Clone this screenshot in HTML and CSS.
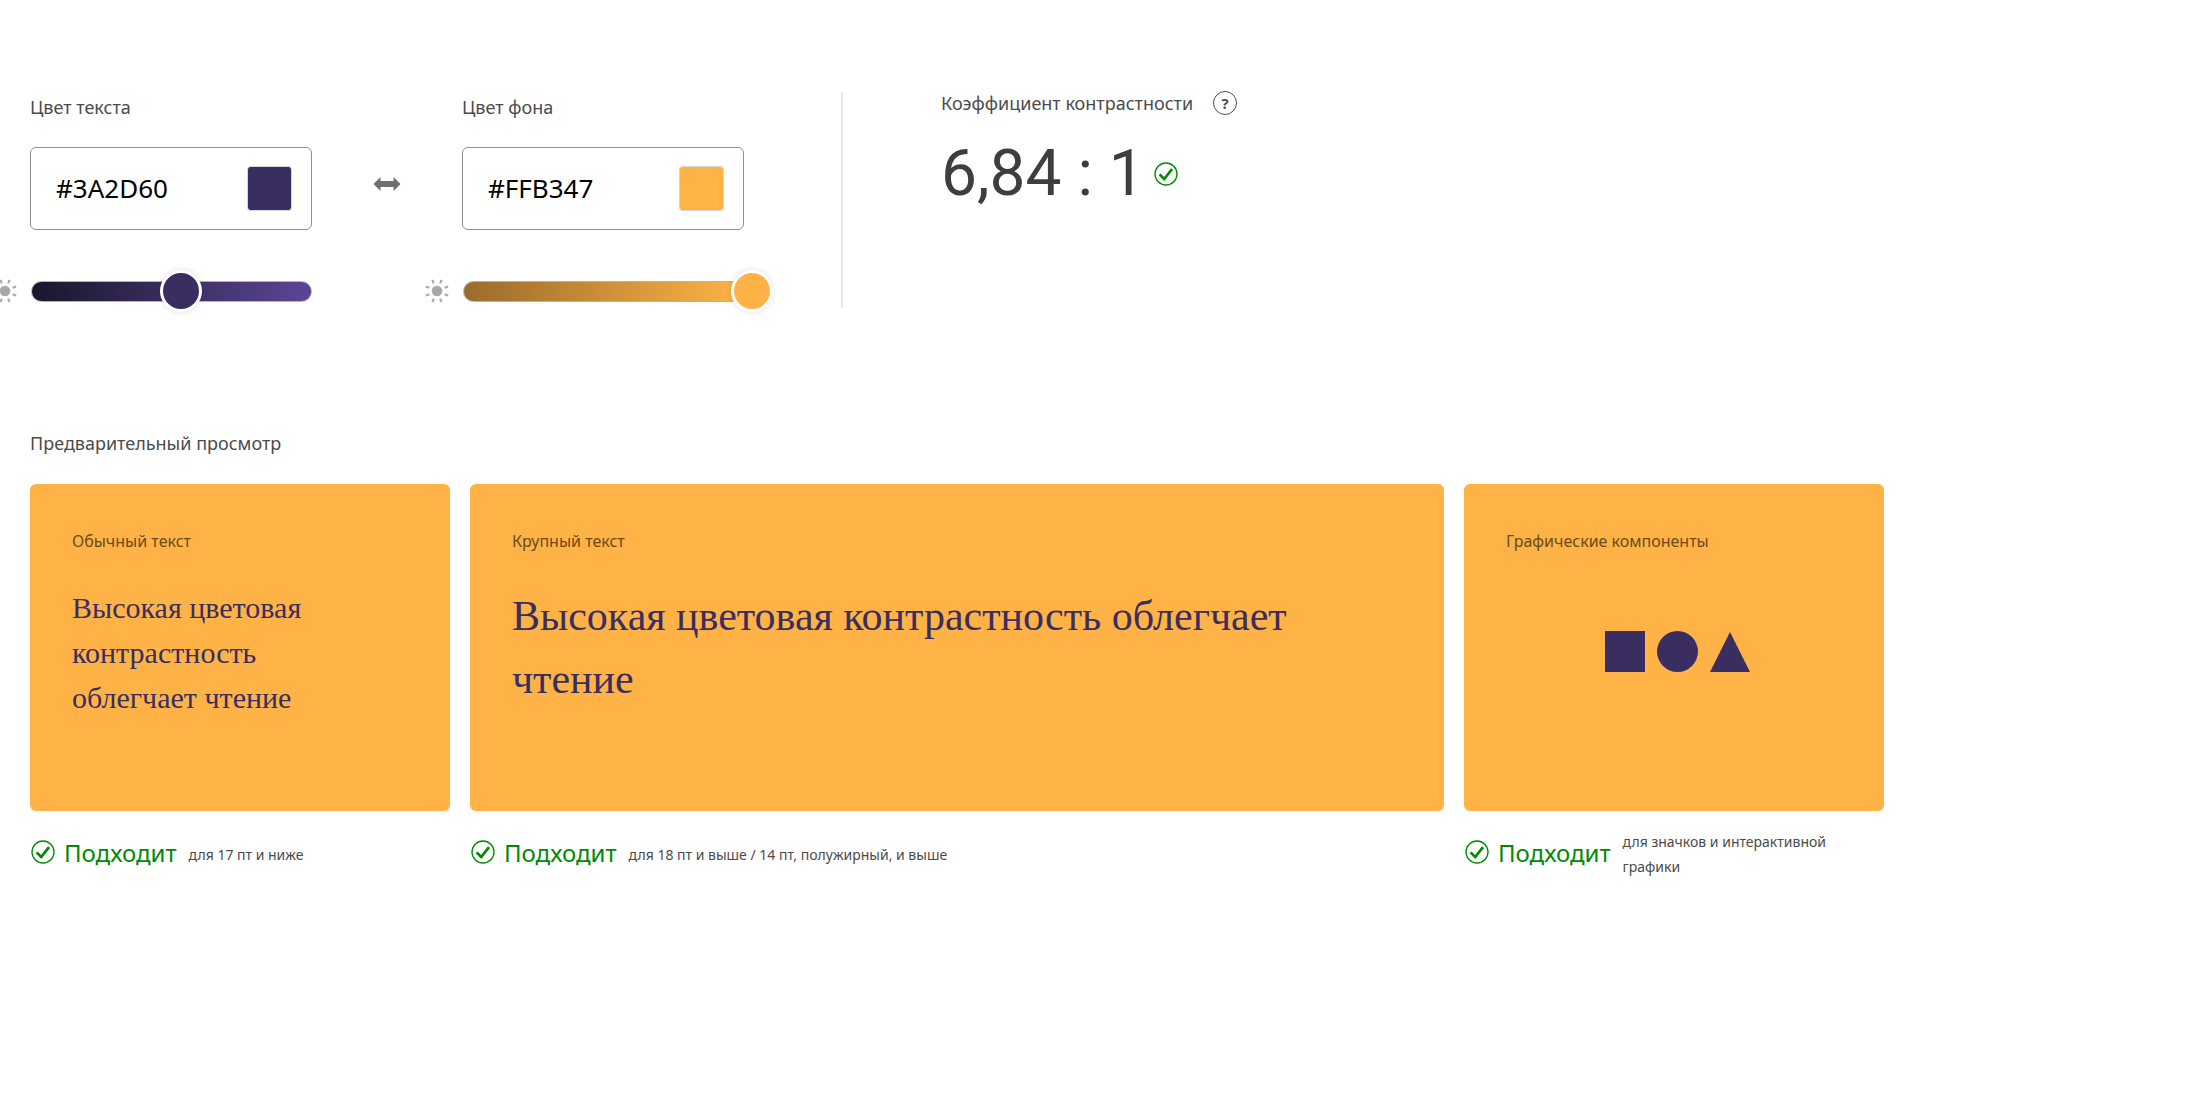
FILE: index.html
```html
<!DOCTYPE html>
<html lang="ru">
<head>
<meta charset="utf-8">
<meta name="viewport" content="width=device-width, initial-scale=1">
<title>Коэффициент контрастности</title>
<link rel="stylesheet" href="styles.css">
</head>
<body>
<svg class="defs" aria-hidden="true">
  <symbol id="icon-check" viewBox="0 0 24 24">
    <circle cx="12" cy="12" r="11" fill="none" stroke="currentColor" stroke-width="1.3"/>
    <path d="M5.600 12.400 10.200 17 18 7.200" fill="none" stroke="currentColor" stroke-width="2.7"/>
  </symbol>
  <symbol id="icon-sun" viewBox="0 0 24 24">
    <circle cx="12" cy="12" r="5.3" fill="currentColor"/>
    <path d="M15.2 4.3 16.6.9M8.800 4.3 7.4.9M19.7 8.800l3.4-1.4M4.3 8.800.9 7.4M19.7 15.2l3.4 1.4M4.3 15.2.9 16.6M15.2 19.7l1.4 3.4M8.800 19.7l-1.4 3.4" fill="none" stroke="currentColor" stroke-width="2.2"/>
  </symbol>
</svg>
<main class="page">
  <section class="tools">
    <div class="field">
      <label class="label" for="text-hex">Цвет текста</label>
      <div class="color-box">
        <input class="hex" id="text-hex" type="text" value="#3A2D60">
        <input class="swatch" type="color" value="#3a2d60" aria-label="Выбрать цвет текста">
      </div>
      <div class="brightness brightness-text">
        <svg class="sun"><use href="#icon-sun"/></svg>
        <div class="slider">
          <span class="bar"></span>
          <input class="range" type="range" min="0" max="100" value="48" aria-label="Яркость текста">
        </div>
      </div>
    </div>
    <button class="swap" type="button" aria-label="Поменять цвета местами">
      <svg width="28" height="14" viewBox="0 0 28 14"><path d="M.5 7 7.5 0v4h13V0l7 7-7 7v-4h-13v4z" fill="#6e6e6e"/></svg>
    </button>
    <div class="field">
      <label class="label" for="back-hex">Цвет фона</label>
      <div class="color-box">
        <input class="hex" id="back-hex" type="text" value="#FFB347">
        <input class="swatch" type="color" value="#ffb347" aria-label="Выбрать цвет фона">
      </div>
      <div class="brightness brightness-back">
        <svg class="sun"><use href="#icon-sun"/></svg>
        <div class="slider">
          <span class="bar"></span>
          <input class="range" type="range" min="0" max="100" value="100" aria-label="Яркость фона">
        </div>
      </div>
    </div>
    <div class="divider"></div>
    <div class="ratio">
      <div class="ratio-head">
        <h2 class="label">Коэффициент контрастности</h2>
        <button class="help" type="button" aria-label="Справка">?</button>
      </div>
      <div class="ratio-row">
        <span class="ratio-value">6,84 : 1</span>
        <svg class="check"><use href="#icon-check"/></svg>
      </div>
    </div>
  </section>

  <h2 class="label preview-title">Предварительный просмотр</h2>
  <section class="previews">
    <article>
      <div class="card">
        <h3 class="card-title">Обычный текст</h3>
        <p class="sample">Высокая цветовая контрастность облегчает чтение</p>
      </div>
      <div class="status">
        <span class="verdict"><svg class="check"><use href="#icon-check"/></svg>Подходит</span>
        <span class="hint">для 17 пт и ниже</span>
      </div>
    </article>
    <article>
      <div class="card">
        <h3 class="card-title">Крупный текст</h3>
        <p class="sample sample-large">Высокая цветовая контрастность облегчает чтение</p>
      </div>
      <div class="status">
        <span class="verdict"><svg class="check"><use href="#icon-check"/></svg>Подходит</span>
        <span class="hint">для 18 пт и выше / 14 пт, полужирный, и выше</span>
      </div>
    </article>
    <article>
      <div class="card">
        <h3 class="card-title">Графические компоненты</h3>
        <svg class="shapes" width="152" height="41" viewBox="0 0 152 41" fill="#3a2d60">
          <path d="M7 0h40v41H7z"/>
          <circle cx="79.500" cy="20.500" r="20.500"/>
          <path d="M132 1l20 40h-40z"/>
        </svg>
      </div>
      <div class="status">
        <span class="verdict"><svg class="check"><use href="#icon-check"/></svg>Подходит</span>
        <span class="hint">для значков и интерактивной графики</span>
      </div>
    </article>
  </section>
</main>
</body>
</html>
```
FILE: styles.css
```css
* {
  box-sizing: border-box;
}

body {
  margin: 0;
  overflow-x: hidden;
  background: #fff;
  color: #4b4b4b;
  font-family: "Noto Sans", "Open Sans", sans-serif;
}

h2,
h3,
p {
  margin: 0;
  font-weight: 400;
}

svg {
  display: block;
  flex: none;
}

.defs {
  display: none;
}

.page {
  max-width: 1914px;
  padding: 91px 30px 60px;
}

.label {
  display: block;
  font-size: 18px;
  line-height: 24px;
}

.tools {
  display: flex;
}

.field {
  width: 282px;
  padding-top: 4px;
}

.color-box {
  display: flex;
  align-items: center;
  justify-content: space-between;
  height: 83px;
  margin-top: 28px;
  padding: 0 19px 0 25px;
  border: 1px solid #909090;
  border-radius: 6px;
}

.hex {
  width: 160px;
  padding: 0 0 2px;
  border: 0;
  outline: 0;
  background: none;
  color: #000;
  font: 26px/36px "Noto Sans", sans-serif;
}

.swatch {
  width: 45px;
  height: 45px;
  padding: 0;
  border: 1px solid #d5d5d5;
  border-radius: 3px;
  background: none;
  appearance: none;
}

.swatch::-webkit-color-swatch-wrapper {
  padding: 0;
}

.swatch::-webkit-color-swatch {
  border: 0;
  border-radius: 2px;
}

.brightness {
  display: flex;
  align-items: center;
  gap: 14px;
  height: 42px;
  margin: 40px 0 0 -37px;
}

.brightness-text {
  --thumb: #3a2d60;
  --from: #1a152b;
  --to: #5b4696;
}

.brightness-back {
  --thumb: #ffb347;
  --from: #996b2b;
  --to: #ffb347;
}

.sun {
  width: 24px;
  height: 24px;
  color: #a9a9a9;
}

.slider {
  display: grid;
  align-items: center;
}

.bar,
.range {
  grid-area: 1 / 1;
}

.bar {
  width: 281px;
  height: 21px;
  border: 1px solid #b3b3b3;
  border-radius: 11px;
  background: linear-gradient(to right, var(--from), var(--to)) border-box;
}

.range {
  width: 310px;
  height: 42px;
  margin: 0;
  background: none;
  appearance: none;
}

.range::-webkit-slider-thumb {
  width: 42px;
  height: 42px;
  border: 3px solid #fff;
  border-radius: 50%;
  background: var(--thumb);
  box-shadow: 0 0 6px rgba(0, 0, 0, 0.12);
  appearance: none;
}

.swap {
  align-self: flex-start;
  width: 150px;
  height: 84px;
  margin-top: 51px;
  padding: 0;
  border: 0;
  background: none;
}

.swap svg {
  margin: 0 auto;
}

.divider {
  width: 2px;
  margin: 1px 98px 4px 97px;
  background: #e6e6e6;
}

.ratio-head {
  display: flex;
  align-items: center;
  gap: 20px;
}

.help {
  width: 24px;
  height: 24px;
  padding: 0;
  border: 1px solid #4b4b4b;
  border-radius: 50%;
  background: none;
  color: #4b4b4b;
  font: 700 15px/20px "Noto Sans", sans-serif;
}

.ratio-row {
  display: flex;
  align-items: center;
  gap: 9px;
  margin-top: 19px;
}

.ratio-value {
  color: #3e3e3e;
  font-family: Roboto, "Noto Sans", sans-serif;
  font-size: 64px;
  line-height: 80px;
}

.check {
  width: 24px;
  height: 24px;
  color: #008a00;
}

.preview-title {
  margin: 119px 0 29px;
}

.previews {
  display: grid;
  grid-template-columns: 420px 1fr 420px;
  gap: 20px;
}

.card {
  min-height: 327px;
  padding: 45px 42px;
  border-radius: 6px;
  background: #ffb347;
}

.card-title {
  color: #6b4a1b;
  font-size: 16px;
  line-height: 24px;
}

.sample {
  margin-top: 32px;
  padding-right: 28px;
  color: #3a2d60;
  font: 30px/45px "Liberation Serif", serif;
}

.sample-large {
  font-size: 42px;
  line-height: 63px;
}

.shapes {
  margin: 78px auto 0;
}

.status {
  display: flex;
  align-items: center;
  gap: 12px;
  min-height: 50px;
  margin-top: 18px;
}

.verdict {
  display: flex;
  align-items: center;
  align-self: flex-start;
  gap: 9px;
  height: 46px;
  padding-left: 1px;
  color: #008a00;
  font-size: 24px;
}

.hint {
  font-size: 14px;
  line-height: 25px;
}
```
